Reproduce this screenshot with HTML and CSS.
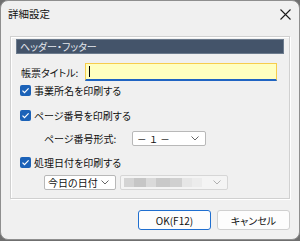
FILE: index.html
```html
<!DOCTYPE html>
<html lang="ja">
<head>
  <meta charset="UTF-8" />
  <title>詳細設定</title>
  <link rel="stylesheet" href="styles.css">
</head>
<body>
  <div class="dialog">
    <div class="titlebar">
      <span class="title">詳細設定</span>
      <svg class="close" width="11" height="11" viewBox="0 0 11 11">
        <path d="M0.5 0.5 L10.5 10.5 M10.5 0.5 L0.5 10.5" stroke="#1a1a1a" stroke-width="1.1" fill="none"/>
      </svg>
    </div>

    <div class="group">
      <div class="group-head">ヘッダー・フッター</div>

      <div class="row row-title">
        <span class="label">帳票タイトル:</span>
        <div class="textbox"><span class="caret"></span></div>
      </div>

      <div class="row row-cb1">
        <span class="check"><svg width="11" height="11" viewBox="0 0 11 11"><path d="M2.5 5.6 L4.5 7.6 L8.6 3.4" stroke="#fff" stroke-width="1.2" fill="none"/></svg></span>
        <span>事業所名を印刷する</span>
      </div>

      <div class="row row-cb2">
        <span class="check"><svg width="11" height="11" viewBox="0 0 11 11"><path d="M2.5 5.6 L4.5 7.6 L8.6 3.4" stroke="#fff" stroke-width="1.2" fill="none"/></svg></span>
        <span>ページ番号を印刷する</span>
      </div>

      <div class="row row-format">
        <span class="label label-format">ページ番号形式:</span>
        <div class="select select-format">
          <span class="wide">－ １ －</span>
          <svg class="chev" width="8" height="5" viewBox="0 0 8 5"><path d="M0.5 0.5 L4 4 L7.5 0.5" stroke="#666" fill="none"/></svg>
        </div>
      </div>

      <div class="row row-cb3">
        <span class="check"><svg width="11" height="11" viewBox="0 0 11 11"><path d="M2.5 5.6 L4.5 7.6 L8.6 3.4" stroke="#fff" stroke-width="1.2" fill="none"/></svg></span>
        <span>処理日付を印刷する</span>
      </div>

      <div class="row row-date">
        <div class="select select-date">
          <span>今日の日付</span>
          <svg class="chev" width="8" height="5" viewBox="0 0 8 5"><path d="M0.5 0.5 L4 4 L7.5 0.5" stroke="#666" fill="none"/></svg>
        </div>
        <div class="select select-off">
          <span class="blur">
            <i class="b1"></i><i class="b2"></i><i class="b3"></i><i class="b4"></i><i class="b5"></i><i class="b6"></i><i class="b7"></i>
          </span>
          <svg class="chev" width="8" height="5" viewBox="0 0 8 5"><path d="M0.5 0.5 L4 4 L7.5 0.5" stroke="#b0b0b0" fill="none"/></svg>
        </div>
      </div>
    </div>

    <div class="buttons">
      <button class="btn btn-ok">OK(F12)</button>
      <button class="btn">キャンセル</button>
    </div>
  </div>
</body>
</html>
```

FILE: styles.css
```css
body {
  margin: 0;
  width: 300px;
  height: 241px;
  background: #6f6f6f;
  font-family: "Noto Sans CJK JP", "Noto Sans", sans-serif;
  font-feature-settings: "palt";
  font-size: 10px;
  color: #111;
  overflow: hidden;
}

.dialog {
  box-sizing: border-box;
  width: 300px;
  height: 240px;
  border: 1px solid #8e8e8e;
  border-radius: 8px;
  background: #f0f0f0;
  display: flex;
  flex-direction: column;
}

.titlebar {
  height: 35px;
  display: flex;
  align-items: flex-start;
  padding: 6px 8px 0 7px;
  box-sizing: border-box;
}

.title {
  font-size: 10.5px;
  line-height: 14px;
  flex: 1;
}

.close {
  margin-top: 2px;
}

.group {
  margin-left: 9px;
  width: 280px;
  height: 163px;
  border: 1px solid #d0d0d0;
  box-shadow: inset 1px 1px #fff, 1px 1px #fff;
  padding: 2px 5px 0 5px;
  box-sizing: border-box;
  display: flex;
  flex-direction: column;
}

.group-head {
  height: 15px;
  background: #44546a;
  border: 1px solid #6d7c8e;
  box-sizing: border-box;
  color: #e4e8ee;
  line-height: 13px;
  padding-left: 3px;
  font-size: 10px;
}

.row {
  display: flex;
  align-items: center;
}

.row-title {
  height: 18px;
  margin-top: 9px;
  padding-left: 5px;
}

.label {
  width: 64px;
}

.textbox {
  width: 192px;
  height: 18px;
  box-sizing: border-box;
  background: #ffffc0;
  border: 1px solid #f7cd4c;
  border-bottom: 2px solid #1f64c3;
  display: flex;
  align-items: center;
  padding-left: 3px;
}

.caret {
  width: 1px;
  height: 11px;
  background: #000;
}

.row-cb1 {
  height: 12px;
  margin-top: 3px;
  padding-left: 4px;
}

.row-cb2 {
  height: 12px;
  margin-top: 13px;
  padding-left: 4px;
}

.row-cb3 {
  height: 12px;
  margin-top: 10px;
  padding-left: 4px;
}

.check {
  width: 11px;
  height: 11px;
  border-radius: 2px;
  background: #1b62b8;
  margin-right: 3px;
  display: flex;
}

.row-format {
  height: 15px;
  margin-top: 10px;
  padding-left: 28px;
}

.label-format {
  width: 88px;
}

.select {
  height: 15px;
  box-sizing: border-box;
  background: #fff;
  border: 1px solid #b8b8b8;
  border-radius: 2px;
  display: flex;
  align-items: center;
  padding: 0 6px 0 3px;
}

.select span {
  flex: 1;
}

.select .wide {
  font-feature-settings: normal;
  font-size: 9.5px;
  padding-left: 1px;
}

.select-format {
  width: 74px;
}

.row-date {
  height: 15px;
  margin-top: 7px;
  padding-left: 28px;
  gap: 4px;
}

.select-date {
  width: 72px;
}

.select-off {
  width: 108px;
  background: #f4f4f4;
  border-color: #d6d6d6;
}

.blur {
  display: flex;
  height: 9px;
}

.blur i {
  display: block;
  height: 9px;
}

.b1 { width: 10px; background: #d4d4d4; }
.b2 { width: 12px; background: #c6c6c6; }
.b3 { width: 10px; background: #dadada; }
.b4 { width: 14px; background: #c9c9c9; }
.b5 { width: 12px; background: #d0d0d0; }
.b6 { width: 10px; background: #e6e6e6; }
.b7 { width: 10px; background: #ececec; }

.buttons {
  display: flex;
  justify-content: flex-end;
  gap: 6px;
  margin-top: 11px;
  padding-right: 9px;
}

.btn {
  width: 73px;
  height: 20px;
  box-sizing: border-box;
  border: 1px solid #d0d0d0;
  border-radius: 3px;
  background: #fdfdfd;
  font-family: inherit;
  font-feature-settings: "palt";
  font-size: 10px;
  color: #111;
  padding: 0;
}

.btn-ok {
  border: 1px solid #1f6fd0;
}
```
